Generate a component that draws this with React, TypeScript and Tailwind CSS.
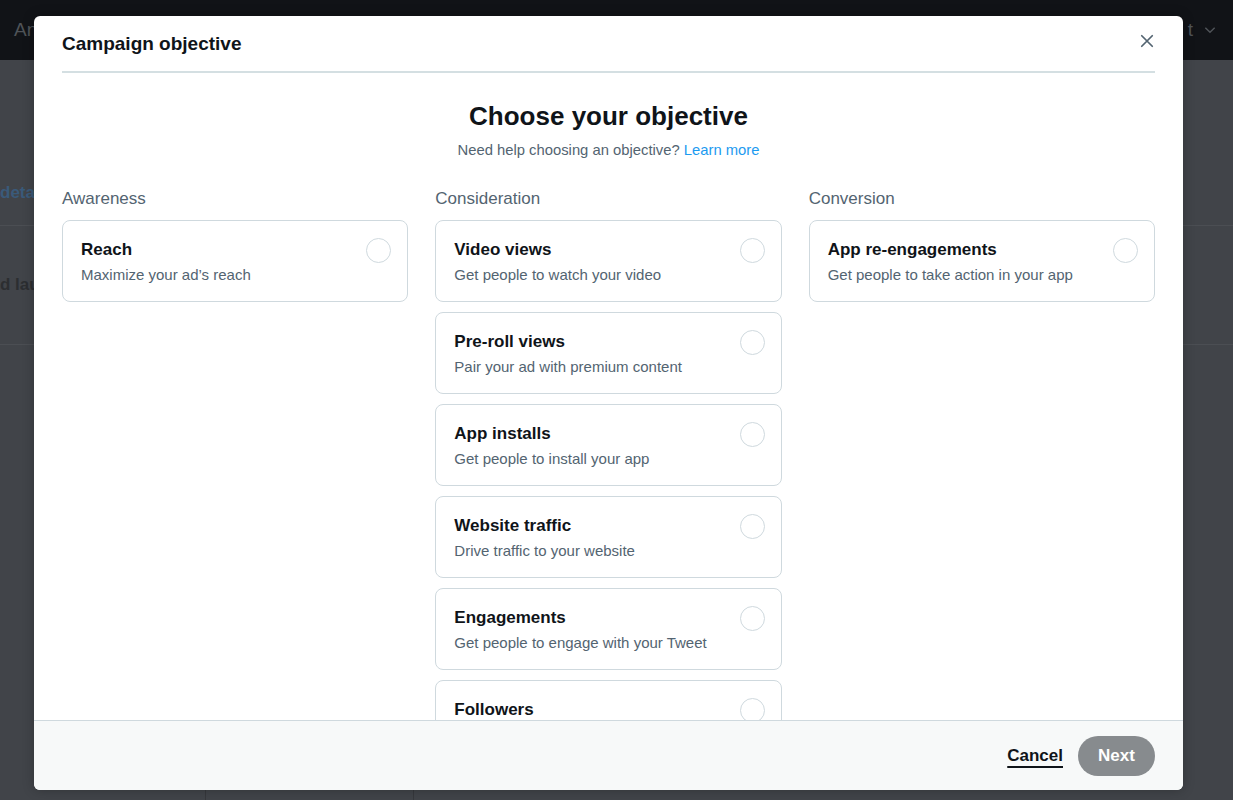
import React from "react"

type Objective = { title: string; desc: string }

const columns: { label: string; items: Objective[] }[] = [
  {
    label: "Awareness",
    items: [{ title: "Reach", desc: "Maximize your ad’s reach" }],
  },
  {
    label: "Consideration",
    items: [
      { title: "Video views", desc: "Get people to watch your video" },
      { title: "Pre-roll views", desc: "Pair your ad with premium content" },
      { title: "App installs", desc: "Get people to install your app" },
      { title: "Website traffic", desc: "Drive traffic to your website" },
      { title: "Engagements", desc: "Get people to engage with your Tweet" },
      { title: "Followers", desc: "Build an audience that engages with you" },
    ],
  },
  {
    label: "Conversion",
    items: [{ title: "App re-engagements", desc: "Get people to take action in your app" }],
  },
]

function ObjectiveCard({ item }: { item: Objective }) {
  return (
    <div className="flex items-start justify-between rounded-lg border border-[#cfd9de] bg-white pl-[18px] pr-[16px] pt-[17px] pb-[18px] h-[82px] shrink-0">
      <div className="flex flex-col">
        <span className="text-[17px] leading-[24px] font-bold text-[#0f1419]">{item.title}</span>
        <span className="mt-[3px] text-[15px] leading-[20px] text-[#536471]">{item.desc}</span>
      </div>
      <span className="w-[25px] h-[25px] rounded-full border-[1.5px] border-[#cfd9de] shrink-0" />
    </div>
  )
}

export default function App() {
  return (
    <div
      className="relative w-[1233px] h-[800px] overflow-hidden bg-[#414449]"
      style={{ fontFamily: '"Liberation Sans", Arial, sans-serif' }}
    >
      {/* page behind the overlay */}
      <div className="flex flex-col h-full">
        <div className="h-[60px] bg-[#111317] flex items-center justify-between pl-[14px] pr-[16px]">
          <span className="text-[19px] text-[#4f5358]">An</span>
          <div className="flex items-center gap-[10px] text-[#4f5358]">
            <span className="text-[19px]">t</span>
            <svg width="14" height="14" viewBox="0 0 24 24" fill="none" stroke="currentColor" strokeWidth="2.5">
              <path d="M4 8l8 8 8-8" />
            </svg>
          </div>
        </div>
        <div className="flex-1 flex flex-col">
          <div className="h-[166px] border-b border-[#4b4e53] flex items-end pb-[20px]">
            <span className="text-[17px] font-bold text-[#3a5a7a]">deta</span>
          </div>
          <div className="h-[119px] border-b border-[#4b4e53] flex items-center">
            <span className="text-[17px] font-bold text-[#2c2e31]">d lau</span>
          </div>
          <div className="flex-1" />
          <div className="h-[10px] flex">
            <div className="w-[206px] border-r border-[#36383c]" />
            <div className="w-[208px] border-r border-[#36383c]" />
          </div>
        </div>
      </div>

      {/* modal */}
      <div className="absolute left-[34px] top-[16px] w-[1149px] h-[774px] bg-white rounded-md flex flex-col overflow-hidden shadow-[0_0_12px_rgba(0,0,0,0.25)]">
        <div className="mx-[28px] pt-[16px] pb-[15px] border-b-2 border-[#d4dfe2] flex items-start justify-between">
          <h2 className="text-[19px] leading-[24px] font-bold text-[#0f1419]">Campaign objective</h2>
          <button className="mt-[2px] mr-[1px] text-[#536471]">
            <svg width="14" height="14" viewBox="0 0 16 16" fill="none" stroke="currentColor" strokeWidth="2" strokeLinecap="round">
              <path d="M2 2l12 12M14 2L2 14" />
            </svg>
          </button>
        </div>

        <div className="flex-1 overflow-hidden px-[28px] pt-[27px]">
          <h1 className="text-center text-[26px] leading-[32px] font-bold text-[#0f1419]">Choose your objective</h1>
          <p className="mt-[8px] text-center text-[14.8px] leading-[20px] text-[#536471]">
            Need help choosing an objective? <span className="text-[#1d9bf0]">Learn more</span>
          </p>
          <div className="mt-[27px] grid grid-cols-3 gap-x-[27px]">
            {columns.map((col) => (
              <div key={col.label} className="flex flex-col">
                <span className="text-[17px] leading-[24px] text-[#536471] mb-[9px]">{col.label}</span>
                <div className="flex flex-col gap-[10px]">
                  {col.items.map((it) => (
                    <ObjectiveCard key={it.title} item={it} />
                  ))}
                </div>
              </div>
            ))}
          </div>
        </div>

        <div className="h-[70px] shrink-0 border-t border-[#cfd9de] bg-[#f7f9f9] flex items-center justify-end gap-[15px] px-[28px]">
          <button className="text-[17px] font-bold text-[#0f1419] underline underline-offset-[5px] decoration-[1.5px]">Cancel</button>
          <button className="h-[40px] w-[77px] rounded-full bg-[#878b8e] text-white text-[17px] font-bold">Next</button>
        </div>
      </div>
    </div>
  )
}
